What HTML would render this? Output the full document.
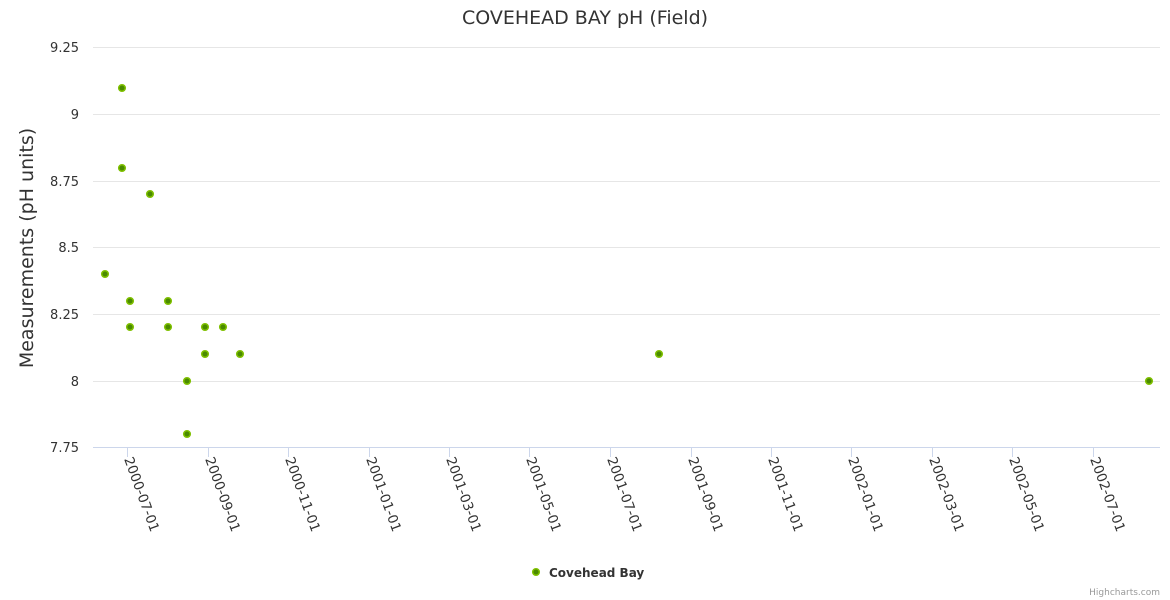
<!DOCTYPE html><html><head><style>body{margin:0;background:#fff}svg{display:block;font-family:"DejaVu Sans","Liberation Sans",sans-serif}</style></head><body>
<svg width="1170" height="600" xmlns="http://www.w3.org/2000/svg">
<text x="585" y="24" text-anchor="middle" font-size="19" fill="#333">COVEHEAD BAY pH (Field)</text>
<g stroke="#e6e6e6" stroke-width="1">
<line x1="93" x2="1160" y1="47.5" y2="47.5"/><line x1="93" x2="1160" y1="114.5" y2="114.5"/><line x1="93" x2="1160" y1="181.5" y2="181.5"/><line x1="93" x2="1160" y1="247.5" y2="247.5"/><line x1="93" x2="1160" y1="314.5" y2="314.5"/><line x1="93" x2="1160" y1="381.5" y2="381.5"/></g>
<line x1="93" x2="1160" y1="447.5" y2="447.5" stroke="#ccd6eb"/>
<g stroke="#ccd6eb"><line x1="127.5" x2="127.5" y1="447" y2="457"/><line x1="208.5" x2="208.5" y1="447" y2="457"/><line x1="288.5" x2="288.5" y1="447" y2="457"/><line x1="369.5" x2="369.5" y1="447" y2="457"/><line x1="449.5" x2="449.5" y1="447" y2="457"/><line x1="529.5" x2="529.5" y1="447" y2="457"/><line x1="610.5" x2="610.5" y1="447" y2="457"/><line x1="691.5" x2="691.5" y1="447" y2="457"/><line x1="771.5" x2="771.5" y1="447" y2="457"/><line x1="851.5" x2="851.5" y1="447" y2="457"/><line x1="932.5" x2="932.5" y1="447" y2="457"/><line x1="1012.5" x2="1012.5" y1="447" y2="457"/><line x1="1093.5" x2="1093.5" y1="447" y2="457"/></g>
<g font-size="13" fill="#333" text-anchor="end">
<text x="79" y="52">9.25</text><text x="79" y="119">9</text><text x="79" y="186">8.75</text><text x="79" y="252">8.5</text><text x="79" y="319">8.25</text><text x="79" y="386">8</text><text x="79" y="452">7.75</text></g>
<text transform="translate(33,248) rotate(-90)" text-anchor="middle" font-size="19" fill="#333">Measurements (pH units)</text>
<g font-size="13.5" fill="#333">
<text transform="translate(124,459) rotate(70)">2000-07-01</text>
<text transform="translate(205,459) rotate(70)">2000-09-01</text>
<text transform="translate(285,459) rotate(70)">2000-11-01</text>
<text transform="translate(366,459) rotate(70)">2001-01-01</text>
<text transform="translate(446,459) rotate(70)">2001-03-01</text>
<text transform="translate(526,459) rotate(70)">2001-05-01</text>
<text transform="translate(607,459) rotate(70)">2001-07-01</text>
<text transform="translate(688,459) rotate(70)">2001-09-01</text>
<text transform="translate(768,459) rotate(70)">2001-11-01</text>
<text transform="translate(848,459) rotate(70)">2002-01-01</text>
<text transform="translate(929,459) rotate(70)">2002-03-01</text>
<text transform="translate(1009,459) rotate(70)">2002-05-01</text>
<text transform="translate(1090,459) rotate(70)">2002-07-01</text></g>
<g fill="#4a8a00" stroke="#7fc000" stroke-width="1.5">
<circle cx="105" cy="274" r="3.3"/><circle cx="122" cy="88" r="3.3"/><circle cx="122" cy="168" r="3.3"/><circle cx="130" cy="301" r="3.3"/><circle cx="130" cy="327" r="3.3"/><circle cx="150" cy="194" r="3.3"/><circle cx="168" cy="301" r="3.3"/><circle cx="168" cy="327" r="3.3"/><circle cx="187" cy="381" r="3.3"/><circle cx="187" cy="434" r="3.3"/><circle cx="205" cy="327" r="3.3"/><circle cx="205" cy="354" r="3.3"/><circle cx="223" cy="327" r="3.3"/><circle cx="240" cy="354" r="3.3"/><circle cx="659" cy="354" r="3.3"/><circle cx="1149" cy="381" r="3.3"/>
<circle cx="536" cy="572" r="3.3"/></g>
<text x="549" y="577" font-size="12" font-weight="bold" fill="#333">Covehead Bay</text>
<text x="1160" y="595" text-anchor="end" font-size="9" fill="#999">Highcharts.com</text>
</svg></body></html>
